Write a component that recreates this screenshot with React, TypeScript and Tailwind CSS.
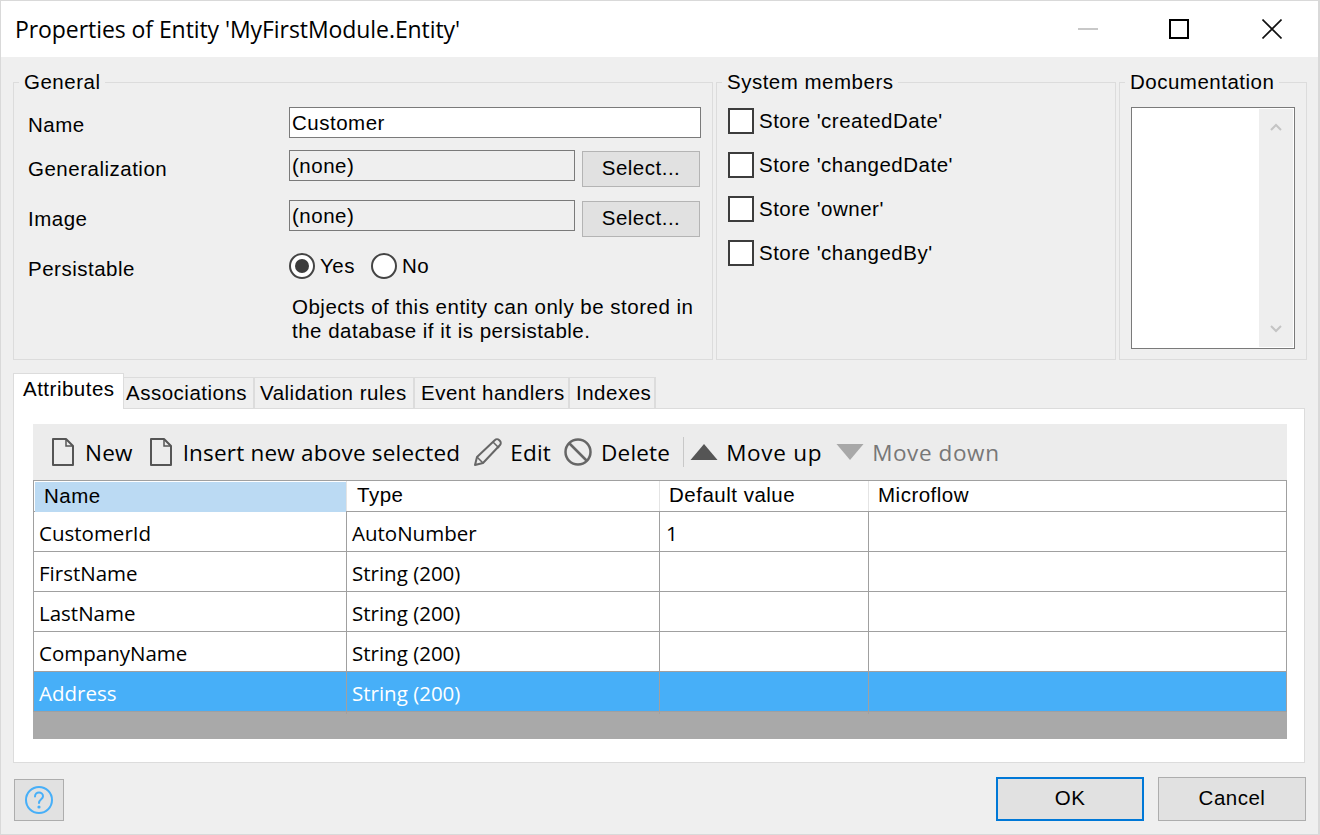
import type { ReactNode } from "react";

const ui = "font-['Liberation_Sans',Arial,sans-serif] tracking-[0.5px]";
const segoe = "font-['Open_Sans','Noto_Sans',sans-serif]";

const rows = [
  { name: "CustomerId", type: "AutoNumber", value: "1" },
  { name: "FirstName", type: "String (200)", value: "" },
  { name: "LastName", type: "String (200)", value: "" },
  { name: "CompanyName", type: "String (200)", value: "" },
  { name: "Address", type: "String (200)", value: "", selected: true },
];

const tabs = [
  { label: "Associations", className: "w-[131px] pl-[2px]" },
  { label: "Validation rules", className: "w-[160px] pl-[5px]" },
  { label: "Event handlers", className: "w-[155px] pl-[6px]" },
  { label: "Indexes", className: "w-[86px] pl-[6px]" },
];
const members = ["createdDate", "changedDate", "owner", "changedBy"];

function GroupBox({ title, className, children }: { title: string; className: string; children: ReactNode }) {
  return (
    <fieldset className={`border border-[#dcdcdc] min-w-0 ${className}`}>
      <legend className="ml-[5px] px-[5px] text-[20.5px] leading-[26px] text-black">{title}</legend>
      {children}
    </fieldset>
  );
}

function FileIcon() {
  return (
    <svg width="24" height="30" viewBox="0 0 24 30" fill="none" stroke="#555" strokeWidth="2" className="ml-[2px] mr-px shrink-0">
      <path d="M2 2h13l7 7v19H2z" strokeLinejoin="round" />
      <path d="M15 2v7h7" strokeWidth="1.5" />
    </svg>
  );
}

function ToolButton({ icon, label, className, gap }: { icon: ReactNode; label: string; className?: string; gap?: string }) {
  return (
    <div className={`flex items-center ${gap ?? "gap-[9px]"}`}>
      {icon}
      <span className={`pt-[2px] ${className ?? "text-black"}`}>{label}</span>
    </div>
  );
}

function LookupField({ value }: { value: string }) {
  return (
    <div className="flex items-start gap-[7px]">
      <div className="w-[286px] h-[31px] border border-[#7a7a7a] bg-[#efefef] pl-[2px] text-[20.5px] leading-[30px]">{value}</div>
      <button className="w-[118px] h-[36px] mt-[1px] border border-[#b4b4b4] bg-[#e1e1e1] pb-[2px] text-[20.5px] leading-[28px]">Select...</button>
    </div>
  );
}

function Radio({ checked, label }: { checked?: boolean; label: string }) {
  return (
    <div className="flex items-center gap-[5px]">
      <span className="flex h-[26px] w-[26px] items-center justify-center rounded-full border-2 border-[#444] bg-white">
        {checked && <span className="h-[14px] w-[14px] rounded-full bg-[#3c3c3c]" />}
      </span>
      <span className="text-[20.5px]">{label}</span>
    </div>
  );
}

function Label({ children, className }: { children: ReactNode; className: string }) {
  return <div className={`text-[20.5px] leading-[24px] ${className}`}>{children}</div>;
}

export default function App() {
  return (
    <div className={`${ui} w-[1320px] h-[835px] bg-[#efefef] border border-[#d9d9d9] border-r-[2px] text-black flex flex-col overflow-hidden`}>
      {/* title bar */}
      <div className="h-[56px] shrink-0 bg-white flex items-center justify-between">
        <div className={`${segoe} pl-[14px] text-[23px] tracking-[-0.07px]`}>Properties of Entity 'MyFirstModule.Entity'</div>
        <div className="flex items-center pr-[36px]">
          <svg width="20" height="20" viewBox="0 0 20 20" className="mr-[71px]">
            <path d="M0 10h20" stroke="#c8c8c8" strokeWidth="2" />
          </svg>
          <svg width="20" height="20" viewBox="0 0 20 20" className="mr-[73px]">
            <rect x="1" y="1" width="18" height="18" fill="none" stroke="#000" strokeWidth="2" />
          </svg>
          <svg width="20" height="20" viewBox="0 0 20 20">
            <path d="M0.5 0.5l19 19M19.5 0.5l-19 19" stroke="#111" strokeWidth="1.6" />
          </svg>
        </div>
      </div>

      {/* group boxes */}
      <div className="flex pl-[12px] pt-[12px] gap-[3px] h-[303px] shrink-0">
        <GroupBox title="General" className="w-[700px] h-[291px]">
          <div className="grid grid-cols-[261px_412px] pl-[14px] pt-[12px]">
            <Label className="pt-[6px]">Name</Label>
            <div className="h-[31px] border border-[#7a7a7a] bg-white pl-[2px] text-[20.5px] leading-[30px]">Customer</div>
            <Label className="pt-[19px] h-[50px]">Generalization</Label>
            <div className="pt-[12px] h-[50px]"><LookupField value="(none)" /></div>
            <Label className="pt-[19px] h-[50px]">Image</Label>
            <div className="h-[50px] pt-[12px]"><LookupField value="(none)" /></div>
            <Label className="pt-[19px]">Persistable</Label>
            <div className="pt-[13px] flex gap-[16px]">
              <Radio checked label="Yes" />
              <Radio label="No" />
            </div>
            <div />
            <div className="pl-[3px] pt-[13px] text-[20.5px] leading-[24px]">
              Objects of this entity can only be stored in
              <br />
              the database if it is persistable.
            </div>
          </div>
        </GroupBox>

        <GroupBox title="System members" className="w-[400px] h-[291px]">
          <div className="flex flex-col gap-[18px] pl-[11px] pt-[13px]">
            {members.map((m) => (
              <div key={m} className="flex items-center gap-[5px] h-[26px]">
                <span className="h-[26px] w-[26px] border-2 border-[#3c3c3c] bg-white" />
                <span className="text-[20.5px]">Store '{m}'</span>
              </div>
            ))}
          </div>
        </GroupBox>

        <GroupBox title="Documentation" className="w-[188px] h-[291px]">
          <div className="ml-[11px] mt-[12px] w-[164px] h-[242px] border border-[#7a7a7a] bg-white flex justify-end p-[1px]">
            <div className="w-[34px] h-full bg-[#eeeeee] flex flex-col items-center justify-between py-[14px]">
              <svg width="12" height="8" viewBox="0 0 12 8"><path d="M1 7l5-5 5 5" fill="none" stroke="#c4c4c4" strokeWidth="2" /></svg>
              <svg width="12" height="8" viewBox="0 0 12 8"><path d="M1 1l5 5 5-5" fill="none" stroke="#c4c4c4" strokeWidth="2" /></svg>
            </div>
          </div>
        </GroupBox>
      </div>

      {/* tabs */}
      <div className="pl-[12px] pr-[13px] mt-[13px] shrink-0">
        <div className="flex items-end h-[36px] relative z-10">
          <div className="h-[36px] w-[111px] border border-b-0 border-[#dcdcdc] bg-white pl-[9px] text-[20.5px] leading-[30px]">Attributes</div>
          {tabs.map((t) => (
            <div key={t.label} className={`h-[32px] border-r-2 border-y border-[#dcdcdc] text-[20.5px] leading-[30px] ${t.className}`}>{t.label}</div>
          ))}
        </div>
        <div className="h-[355px] -mt-px border border-[#dcdcdc] bg-white pl-[19px] pr-[17px] pt-[15px]">
          {/* toolbar */}
          <div className={`${segoe} h-[56px] bg-[#ececec] flex items-center gap-[14px] pl-[16px] text-[22.5px] tracking-[0.2px]`}>
            <ToolButton icon={<FileIcon />} label="New" />
            <ToolButton icon={<FileIcon />} label="Insert new above selected" />
            <ToolButton
              icon={
                <svg width="30" height="30" viewBox="0 0 30 30" fill="none" stroke="#666" strokeWidth="2" className="-ml-px -mr-[2px]">
                  <path d="M2 28l2-8L22 3c1-1 3-1 4 0l1 1c1 1 1 3 0 4L10 26z" strokeLinejoin="round" />
                  <path d="M4 20l6 6M20 5l6 6" strokeWidth="1.5" />
                </svg>
              }
              label="Edit"
            />
            <div className="-ml-px">
              <ToolButton
                icon={
                  <svg width="28" height="28" viewBox="0 0 28 28" fill="none" stroke="#666" strokeWidth="2.5">
                    <circle cx="14" cy="14" r="12.5" />
                    <path d="M5 5l18 18" />
                  </svg>
                }
                label="Delete"
              />
            </div>
            <div className="flex items-center gap-[6px] -ml-px">
              <div className="h-[30px] w-px bg-[#c8c8c8]" />
              <div className="flex items-center gap-[8px]">
                <svg width="28" height="18" viewBox="0 0 28 18">
                  <path d="M14 1l13.500 16H.5z" fill="#555" />
                </svg>
                <span className="pt-[2px] tracking-[0.7px]">Move up</span>
              </div>
            </div>
            <ToolButton
              gap="gap-[8px]"
              className="text-[#777] tracking-[0.6px]"
              icon={
                <svg width="28" height="18" viewBox="0 0 28 18">
                  <path d="M14 17L.5 1h27z" fill="#a8a8a8" />
                </svg>
              }
              label="Move down"
            />
          </div>

          {/* table */}
          <div className="h-[259px] bg-[#a9a9a9] flex flex-col">
            <div className="grid grid-cols-[312px_313px_209px_1fr] h-[32px] bg-white border-t border-x border-b border-[#a0a0a0] text-[20.5px] leading-[28px]">
              <div className="bg-[#bbdaf3] pl-[9px] ml-px mt-px -mb-px">Name</div>
              <div className="pl-[10px] border-l border-[#e4e4e4]">Type</div>
              <div className="pl-[9px] border-l border-[#e4e4e4]">Default value</div>
              <div className="pl-[9px] border-l border-[#e4e4e4]">Microflow</div>
            </div>
            {rows.map((r) => (
              <div
                key={r.name}
                className={`${segoe} grid grid-cols-[312px_313px_209px_1fr] h-[40px] border-x border-b border-[#a0a0a0] text-[20.5px] leading-[42px] tracking-normal ${r.selected ? "bg-[#47aff8] text-white" : "bg-white text-black"}`}
              >
                <div className="pl-[5px]">{r.name}</div>
                <div className="pl-[5px] border-l border-[#a0a0a0]">{r.type}</div>
                <div className="pl-[6px] border-l border-[#a0a0a0]">{r.value}</div>
                <div className="border-l border-[#a0a0a0]" />
              </div>
            ))}
          </div>
        </div>
      </div>

      {/* footer */}
      <div className="flex items-start justify-between pl-[13px] pr-[12px] mt-[14px]">
        <button className="mt-[2px] w-[50px] h-[42px] border border-[#adadad] bg-[#e1e1e1] flex items-center justify-center">
          <svg width="28" height="28" viewBox="0 0 28 28" fill="none" stroke="#47aff8" strokeWidth="2">
            <circle cx="14" cy="14" r="13" />
            <path d="M10 10.5c0-2.5 2-4 4-4s4 1.500 4 3.800c0 3-4 3-4 6.700" strokeLinecap="round" />
            <circle cx="14" cy="21" r="1.600" fill="#47aff8" stroke="none" />
          </svg>
        </button>
        <div className="flex gap-[14px]">
          <button className="w-[148px] h-[44px] pb-[2px] border-2 border-[#0078d7] bg-[#e1e1e1] text-[20.5px]">OK</button>
          <button className="w-[148px] h-[44px] pb-[2px] border border-[#adadad] bg-[#e1e1e1] text-[20.5px]">Cancel</button>
        </div>
      </div>
    </div>
  );
}
